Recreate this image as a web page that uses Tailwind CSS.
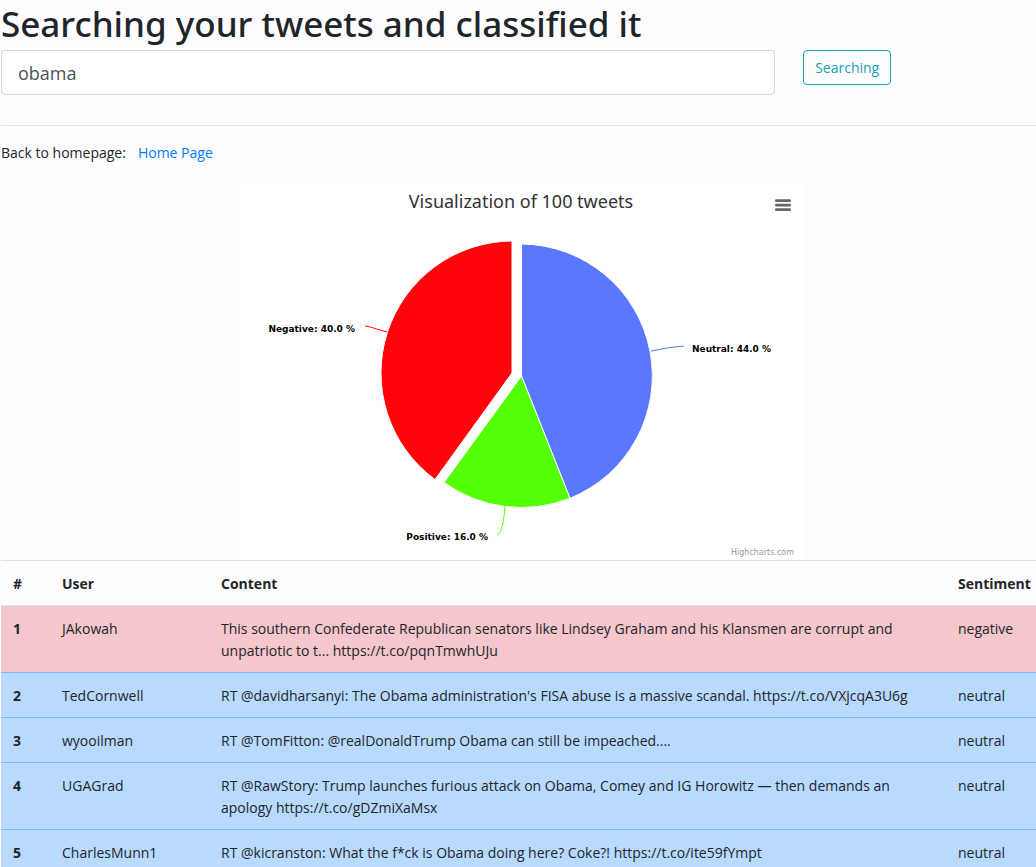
<!DOCTYPE html>
<html lang="en">
<head>
<meta charset="utf-8">
<title>Searching your tweets and classified it</title>
<script src="https://cdn.jsdelivr.net/npm/@tailwindcss/browser@4"></script>
</head>
<body class="overflow-x-hidden bg-[#fdfdff] pl-px font-['Segoe_UI','Open_Sans','Noto_Sans',sans-serif] text-sm leading-[22px] text-[#212529]">
  <h1 class="pb-[3px] font-['Segoe_UI','Noto_Sans',sans-serif] text-[35px] leading-[47px] font-medium">Searching your tweets and classified it</h1>
  <form class="flex items-start gap-7" onsubmit="return false">
    <input type="text" aria-label="Search tweets" value="obama" class="h-[45px] w-[74.8%] rounded-sm border border-[#ced4da] bg-white px-4 text-lg text-[#495057]">
    <button type="submit" class="rounded-sm border border-[#17a2b8] px-[11px] pt-[6px] pb-[5px] text-[#17a2b8]">Searching</button>
  </form>
  <hr class="mt-[30px] border-t border-[#dfe1e4]">
  <p class="mt-4 flex gap-3"><span>Back to homepage:</span><a href="#" class="text-[#007bff]">Home Page</a></p>
  <div class="mt-5 flex justify-center pl-1.5">
    <figure class="relative w-[563px] bg-white">
      <svg viewBox="240 184 563 376" class="block w-full font-['Lucida_Grande','Noto_Sans',sans-serif]" role="img" aria-label="Sentiment of 100 tweets">
        <text x="521" y="208" text-anchor="middle" font-size="18" fill="#333333">Visualization of 100 tweets</text>
        <g stroke="#ffffff" stroke-width="1" stroke-linejoin="round">
          <path fill="#5978ff" d="M521.5 376V244A132 132 0 0 1 570 498.3Z"/>
          <path fill="#55ff05" d="M521.5 376L570 498.3A132 132 0 0 1 444 482.5Z"/>
          <path fill="#ff050b" d="M512 373L435 479.5A132 132 0 0 1 512 241Z"/>
        </g>
        <g fill="none" stroke-width="1">
          <path stroke="#5978ff" d="M651 351Q669 347 684 346"/>
          <path stroke="#55ff05" d="M505 506C504 520 502 533 497 535"/>
          <path stroke="#ff050b" d="M365 326C370 326.5 376 329 387 332"/>
        </g>
        <g class="font-['Lucida_Grande','DejaVu_Sans',sans-serif]" font-size="9" font-weight="700" fill="#000000">
          <text x="355" y="332" text-anchor="end">Negative: 40.0 %</text>
          <text x="692" y="352">Neutral: 44.0 %</text>
          <text x="488" y="540" text-anchor="end">Positive: 16.0 %</text>
        </g>
        <text class="font-['Lucida_Grande','DejaVu_Sans',sans-serif]" x="794" y="555" text-anchor="end" font-size="8" fill="#999999">Highcharts.com</text>
      </svg>
      <button type="button" aria-label="Chart context menu" class="absolute top-[11px] right-2 flex h-5 w-6 items-center justify-center">
        <svg viewBox="0 0 18 14" class="h-[14px] w-[18px]" fill="none" stroke="#666666" stroke-width="2.7" stroke-linecap="round"><path d="M2.3 2.7H15.7M2.3 7.2H15.7M2.3 11.7H15.7"/></svg>
      </button>
    </figure>
  </div>
  <table class="w-full table-fixed border-collapse text-left [&_td]:px-3 [&_td]:pt-3 [&_td]:pb-2.5 [&_td]:align-top [&_th]:px-3 [&_th]:pt-3 [&_th]:pb-2.5 [&_th]:align-top [&_th]:font-bold">
    <colgroup><col class="w-[49px]"><col class="w-[159px]"><col><col class="w-[90px]"></colgroup>
    <thead>
      <tr class="border-t border-[#dee2e6]"><th scope="col">#</th><th scope="col">User</th><th scope="col">Content</th><th scope="col">Sentiment</th></tr>
    </thead>
    <tbody>
      <tr class="border-t border-[#dee2e6] bg-[#f5c6cb]"><th scope="row">1</th><td>JAkowah</td><td>This southern Confederate Republican senators like Lindsey Graham and his Klansmen are corrupt and unpatriotic to t... https://t.co/pqnTmwhUJu</td><td>negative</td></tr>
      <tr class="border-t border-[#7abaff] bg-[#b8daff]"><th scope="row">2</th><td>TedCornwell</td><td>RT @davidharsanyi: The Obama administration's FISA abuse is a massive scandal. https://t.co/VXjcqA3U6g</td><td>neutral</td></tr>
      <tr class="border-t border-[#7abaff] bg-[#b8daff]"><th scope="row">3</th><td>wyooilman</td><td>RT @TomFitton: @realDonaldTrump Obama can still be impeached....</td><td>neutral</td></tr>
      <tr class="border-t border-[#7abaff] bg-[#b8daff]"><th scope="row">4</th><td>UGAGrad</td><td>RT @RawStory: Trump launches furious attack on Obama, Comey and IG Horowitz — then demands an apology https://t.co/gDZmiXaMsx</td><td>neutral</td></tr>
      <tr class="border-t border-[#7abaff] bg-[#b8daff]"><th scope="row">5</th><td>CharlesMunn1</td><td>RT @kicranston: What the f*ck is Obama doing here? Coke?! https://t.co/ite59fYmpt</td><td>neutral</td></tr>
    </tbody>
  </table>
</body>
</html>
